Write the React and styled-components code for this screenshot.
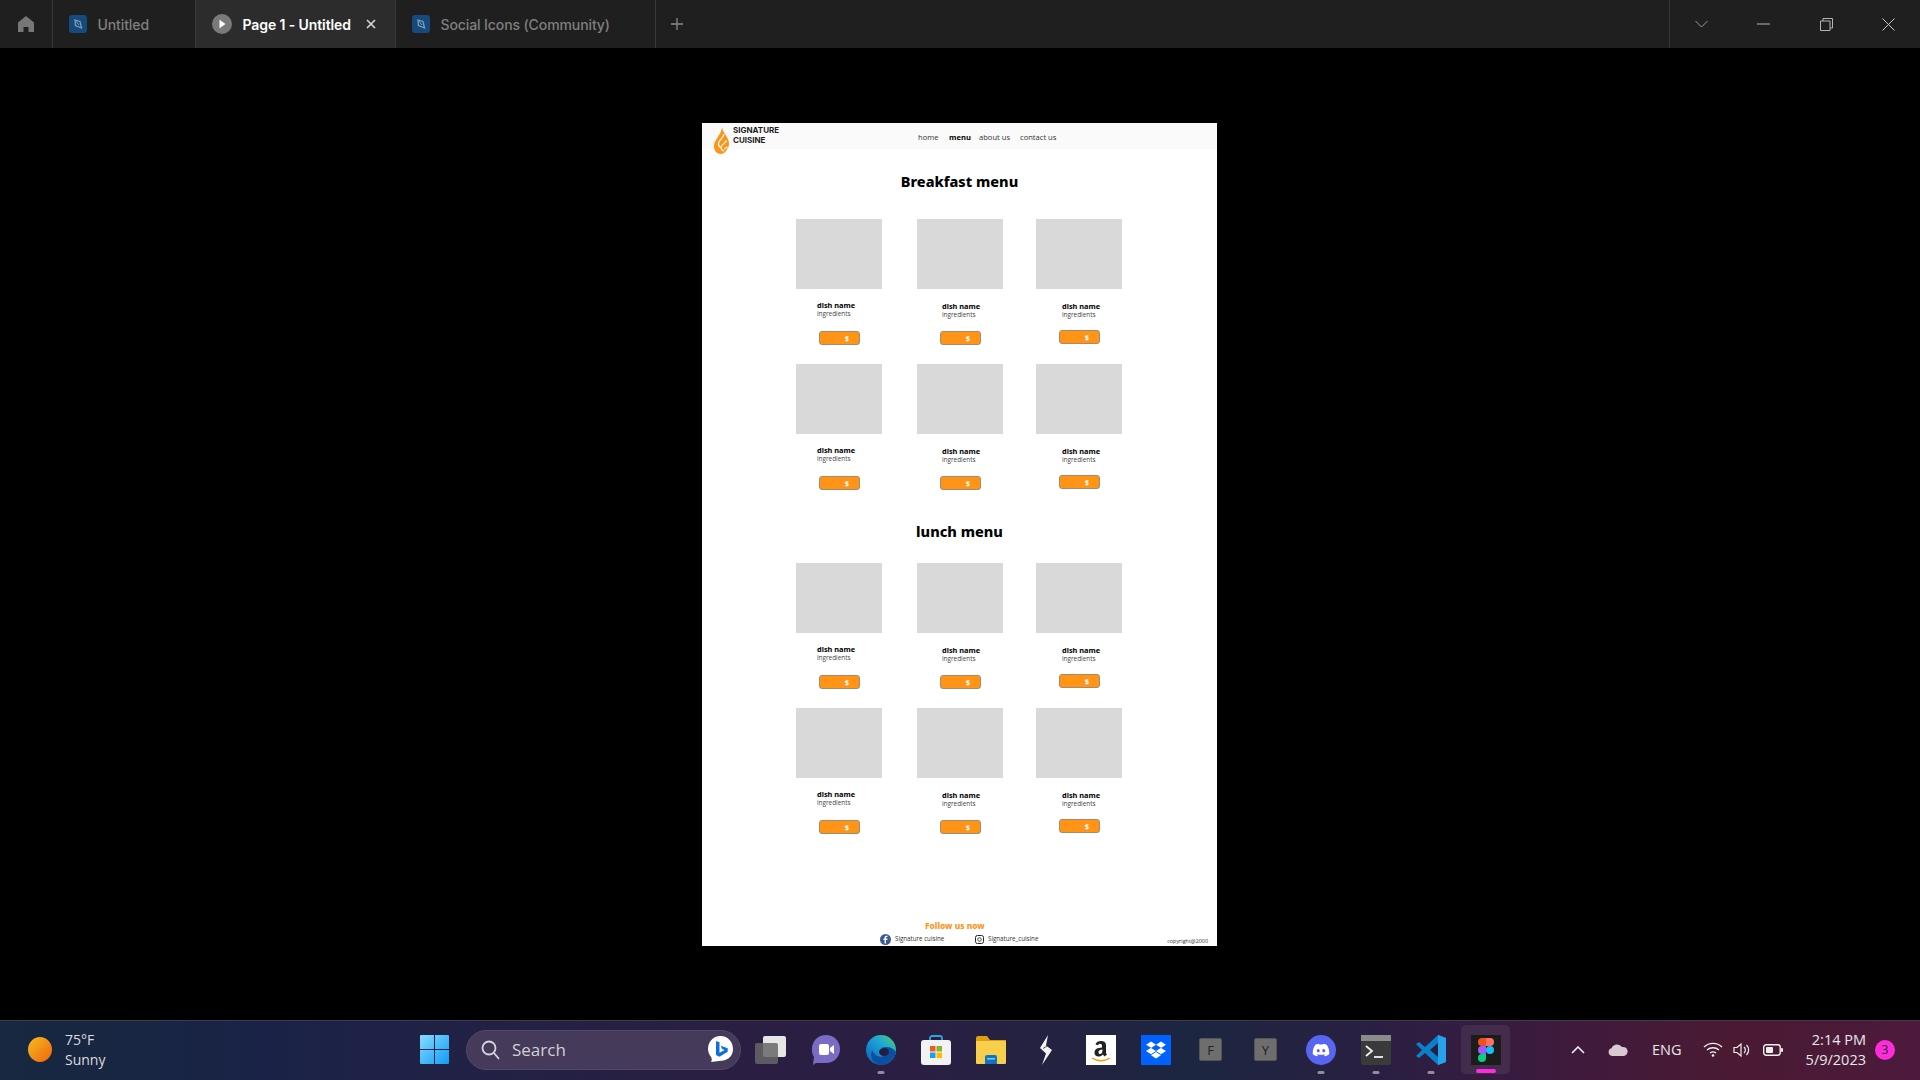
import React from 'react';
import styled, { createGlobalStyle } from 'styled-components';
import { FaDiscord, FaDropbox } from 'react-icons/fa';

const GlobalStyle = createGlobalStyle`
  html, body {
    margin: 0;
    padding: 0;
    background: #000;
    overflow: hidden;
  }
  * { box-sizing: border-box; }
`;

const orange = '#ff9416';

const Screen = styled.div`
  width: 1920px;
  height: 1080px;
  display: flex;
  flex-direction: column;
  background: #000;
  font-family: Inter, "Liberation Sans", sans-serif;
`;

/* ---------- figma title bar ---------- */

const TitleBar = styled.header`
  height: 48px;
  flex: none;
  display: flex;
  align-items: stretch;
  background: #1f1f1f;
`;

const HomeTab = styled.div`
  width: 53px;
  display: flex;
  align-items: center;
  justify-content: center;
  border-right: 1px solid #383838;
`;

const Tab = styled.div`
  width: ${({ $width }) => $width}px;
  display: flex;
  align-items: center;
  gap: 10.5px;
  padding-left: 16px;
  font-size: 14px;
  font-weight: ${({ $active }) => ($active ? 600 : 500)};
  letter-spacing: -0.1px;
  color: ${({ $active }) => ($active ? '#fff' : '#7f7f7f')};
  background: ${({ $active }) => ($active ? '#2c2c2c' : 'transparent')};
  border-right: 1px solid #383838;
`;

const TabClose = styled.svg`
  margin-left: 5px;
`;

const AddTab = styled.div`
  width: 42px;
  display: flex;
  align-items: center;
  justify-content: center;
`;

const Spacer = styled.div`
  flex: 1;
`;

const WindowControls = styled.div`
  width: 251px;
  display: flex;
  border-left: 1px solid #383838;
`;

const WindowButton = styled.div`
  width: 63px;
  display: flex;
  align-items: center;
  justify-content: center;
`;

const FileIcon = () => (
  <svg width="18" height="18" viewBox="0 0 18 18">
    <rect width="18" height="18" rx="3" fill="#154a7a" />
    <path d="M6 5l5 1.5 1.5 6.5-6-2.5z" fill="none" stroke="#7d9db8" strokeWidth="1.3" />
    <path d="M6 5l4 5" stroke="#7d9db8" strokeWidth="1" />
  </svg>
);

const PlayIcon = () => (
  <svg width="20" height="20" viewBox="0 0 20 20">
    <circle cx="10" cy="10" r="10" fill="#7a7a7a" />
    <path d="M7.5 5.8l6 4.2-6 4.2z" fill="#fff" />
  </svg>
);

const TopBar = () => (
  <TitleBar>
    <HomeTab>
      <svg width="18" height="18" viewBox="0 0 18 18">
        <path d="M9 1l8 6.5V17h-5.5v-5h-5v5H1V7.500z" fill="#777" />
      </svg>
    </HomeTab>
    <Tab $width={143}><FileIcon />Untitled</Tab>
    <Tab $width={200} $active><PlayIcon />Page 1 - Untitled
      <TabClose width="10" height="10" viewBox="0 0 10 10">
        <path d="M1 1l8 8M9 1l-8 8" stroke="#d8d8d8" strokeWidth="1.6" />
      </TabClose>
    </Tab>
    <Tab $width={260}><FileIcon />Social Icons (Community)</Tab>
    <AddTab>
      <svg width="12" height="12" viewBox="0 0 12 12">
        <path d="M6 0v12M0 6h12" stroke="#8a8a8a" strokeWidth="1.3" />
      </svg>
    </AddTab>
    <Spacer />
    <WindowControls>
      <WindowButton>
        <svg width="13" height="8" viewBox="0 0 13 8"><path d="M.5 1l6 6 6-6" fill="none" stroke="#9a9a9a" /></svg>
      </WindowButton>
      <WindowButton>
        <svg width="13" height="2" viewBox="0 0 13 2"><path d="M0 1h13" stroke="#b5b5b5" /></svg>
      </WindowButton>
      <WindowButton>
        <svg width="13" height="13" viewBox="0 0 13 13">
          <path d="M.5 3h9.500v9.500H.5z M3 3V.5h9.500V10H10" fill="none" stroke="#b5b5b5" />
        </svg>
      </WindowButton>
      <WindowButton>
        <svg width="13" height="13" viewBox="0 0 13 13"><path d="M.5.5l12 12M12.500.5l-12 12" stroke="#c8c8c8" /></svg>
      </WindowButton>
    </WindowControls>
  </TitleBar>
);

/* ---------- prototype page ---------- */

const Canvas = styled.main`
  flex: 1;
  display: flex;
  justify-content: center;
  padding: 75px 1px 0 0;
`;

const Page = styled.div`
  width: 515px;
  height: 823px;
  display: flex;
  flex-direction: column;
  background: #fff;
  color: #000;
  font-family: "Open Sans", "Noto Sans", sans-serif;
`;

const Nav = styled.nav`
  height: 26px;
  flex: none;
  position: relative;
  display: flex;
  padding-left: 216px;
  background: #fafafa;
`;

const Logo = styled.div`
  position: absolute;
  left: 12px;
  top: 4px;
  display: flex;
  gap: 4px;
`;

const LogoText = styled.div`
  font-family: Inter, "Liberation Sans", sans-serif;
  font-size: 8px;
  font-weight: 700;
  line-height: 9.5px;
  color: #1c1c1c;
  margin-top: -1px;
`;

const NavLink = styled.span`
  width: ${({ $width }) => $width}px;
  font-size: 7.6px;
  line-height: 28px;
  font-weight: ${({ $active }) => ($active ? 700 : 400)};
  color: ${({ $active }) => ($active ? '#000' : '#333')};
`;

const Heading = styled.h2`
  margin: ${({ $top }) => $top}px 0 0;
  height: 20px;
  font-family: "Noto Sans", sans-serif;
  font-size: 14.5px;
  line-height: 20px;
  font-weight: 800;
  text-align: center;
  color: #000;
`;

const MenuGrid = styled.div`
  display: grid;
  grid-template-columns: 121px 119px 86px;
  grid-auto-rows: 145px;
  margin-top: ${({ $top }) => $top}px;
  padding-left: 94px;
`;

const Dish = styled.div`
  display: flex;
  flex-direction: column;
`;

const Photo = styled.div`
  width: 86px;
  height: 70px;
  flex: none;
  background: #d9d9d9;
`;

const DishInfo = styled.div`
  height: ${({ $height }) => $height}px;
  padding: ${({ $top }) => $top}px 0 0 ${({ $left }) => $left}px;
`;

const DishName = styled.div`
  font-family: "Noto Sans", sans-serif;
  font-size: 7.4px;
  line-height: 9px;
  font-weight: 700;
  color: #000;
`;

const Ingredients = styled.div`
  font-size: 6.4px;
  line-height: 8px;
  color: #444;
`;

const PriceButton = styled.div`
  width: 41px;
  height: 14px;
  margin-left: 23px;
  display: flex;
  align-items: center;
  justify-content: flex-end;
  padding-right: 10px;
  border: 1px solid #a58c70;
  border-radius: 3px;
  background: ${orange};
  color: #fff;
  font-size: 7.5px;
  font-weight: 700;
`;

const Footer = styled.footer`
  margin-top: auto;
  height: 25px;
  position: relative;
  padding-left: 178px;
`;

const FollowTitle = styled.div`
  padding-left: 45px;
  font-family: "Noto Sans", sans-serif;
  font-size: 8.4px;
  line-height: 10px;
  font-weight: 800;
  color: ${orange};
`;

const Socials = styled.div`
  display: flex;
  margin-top: 2px;
`;

const Social = styled.div`
  width: ${({ $width }) => $width}px;
  display: flex;
  align-items: center;
  gap: 4px;
  font-size: 6.2px;
  line-height: 12px;
  color: #333;
`;

const Copyright = styled.div`
  position: absolute;
  right: 9px;
  bottom: 1px;
  font-size: 5.4px;
  line-height: 8px;
  color: #333;
`;

const Flame = () => (
  <svg width="15" height="27" viewBox="0 0 15 27">
    <path
      d="M8 0c.6 3.500 2.500 6 4 8.500 1.500 2.500 3 5 3 8 0 2-.5 3.500-1.500 5-1.500 3-3.500 5.500-6.500 5.500C3 27 0 24 0 19.500c0-4.500 2.500-7 4.500-10.500C6 6.500 7.800 3.500 8 0z"
      fill={orange}
    />
    <path
      d="M10 7c.2 3-5.500 6-5.500 10 0 1.800 1 3 2.500 3.500M12.500 13.500C11.500 16 7 17.500 7 20.500c0 1.500 1.300 3 3 3.500M13.500 20c-1 .7-3 1.200-3 2.500"
      fill="none"
      stroke="#fff"
      strokeWidth="1.200"
    />
  </svg>
);

const columns = [
  { left: 21, top: 12, height: 42 },
  { left: 25, top: 13, height: 42 },
  { left: 26, top: 13, height: 41 },
];

const MenuSection = ({ title, titleTop, gridTop }) => (
  <>
    <Heading $top={titleTop}>{title}</Heading>
    <MenuGrid $top={gridTop}>
      {[0, 1, 2, 3, 4, 5].map((n) => {
        const col = columns[n % 3];
        return (
          <Dish key={n}>
            <Photo />
            <DishInfo $left={col.left} $top={col.top} $height={col.height}>
              <DishName>dish name</DishName>
              <Ingredients>ingredients</Ingredients>
            </DishInfo>
            <PriceButton>$</PriceButton>
          </Dish>
        );
      })}
    </MenuGrid>
  </>
);

const PrototypePage = () => (
  <Canvas>
    <Page>
      <Nav>
        <Logo>
          <Flame />
          <LogoText>SIGNATURE<br />CUISINE</LogoText>
        </Logo>
        <NavLink $width={31}>home</NavLink>
        <NavLink $width={30} $active>menu</NavLink>
        <NavLink $width={41}>about us</NavLink>
        <NavLink $width={40}>contact us</NavLink>
      </Nav>
      <MenuSection title="Breakfast menu" titleTop={22} gridTop={28} />
      <MenuSection title="lunch menu" titleTop={12} gridTop={22} />
      <Footer>
        <FollowTitle>Follow us now</FollowTitle>
        <Socials>
          <Social $width={95}>
            <svg width="11" height="11" viewBox="0 0 11 11">
              <circle cx="5.500" cy="5.500" r="5.500" fill="#3b5998" />
              <path d="M6 9.500V6h1.300l.2-1.400H6v-.9c0-.4.2-.7.7-.7h.8V1.800H6.400C5.200 1.800 4.600 2.500 4.600 3.600v1H3.500V6h1.100v3.500z" fill="#fff" />
            </svg>
            Signature cuisine
          </Social>
          <Social $width={90}>
            <svg width="9" height="9" viewBox="0 0 9 9">
              <rect x=".5" y=".5" width="8" height="8" rx="2" fill="none" stroke="#222" />
              <circle cx="4.500" cy="4.500" r="1.800" fill="none" stroke="#222" strokeWidth=".8" />
            </svg>
            Signature_cuisine
          </Social>
        </Socials>
        <Copyright>copyright@2000</Copyright>
      </Footer>
    </Page>
  </Canvas>
);

/* ---------- windows taskbar ---------- */

const Taskbar = styled.footer`
  height: 60px;
  flex: none;
  display: flex;
  align-items: center;
  padding-bottom: 2px;
  color: #eee;
  font-family: "Open Sans", "Noto Sans", sans-serif;
  border-top: 1px solid #3c3a4c;
  background: linear-gradient(90deg, #17283f 0%, #1a2347 14%, #2a1f42 38%, #2a1f42 48%, #1c2640 62%, #2a1f42 72%, #3f1a3d 82%, #4a1a32 90%, #4c1a3c 100%);
`;

const Weather = styled.div`
  width: 407px;
  display: flex;
  align-items: center;
  gap: 13px;
  padding-left: 28px;
`;

const Sun = styled.div`
  width: 24px;
  height: 25px;
  border-radius: 50%;
  background: linear-gradient(135deg, #f6bd22, #ef640c);
`;

const WeatherText = styled.div`
  font-size: 14px;
  line-height: 20px;
  color: #dcdcdc;
`;

const Slot = styled.div`
  width: 55px;
  height: 49px;
  flex: none;
  position: relative;
  display: flex;
  align-items: center;
  justify-content: center;

  ${({ $selected }) =>
    $selected &&
    `&::before {
      content: '';
      position: absolute;
      inset: 0 3px;
      border-radius: 5px;
      background: rgba(255, 255, 255, 0.07);
    }`}

  > svg {
    position: relative;
  }
`;

const Indicator = styled.span`
  position: absolute;
  left: 50%;
  bottom: ${({ $wide }) => ($wide ? 1 : 0)}px;
  width: ${({ $wide }) => ($wide ? 20 : 7)}px;
  height: ${({ $wide }) => ($wide ? 4 : 3)}px;
  transform: translateX(-50%);
  border-radius: 2px;
  background: ${({ $wide }) => ($wide ? '#ff2bdc' : '#8f8f99')};
`;

const SearchBox = styled.div`
  width: 275px;
  height: 40px;
  margin: 0 2px 0 4px;
  flex: none;
  display: flex;
  align-items: center;
  gap: 12px;
  padding: 0 7px 0 14px;
  border-radius: 20px;
  background: #463a5a;
  border: 1px solid #54486a;
  font-size: 17px;
  color: #d0d0d4;
`;

const LetterTile = styled.div`
  width: 23px;
  height: 23px;
  display: flex;
  align-items: center;
  justify-content: center;
  border: 1px solid #555;
  border-radius: 2px;
  background: #6e6e6e;
  color: #222;
  font-size: 13px;
`;

const Tray = styled.div`
  margin-left: auto;
  display: flex;
  align-items: center;
  padding-right: 25px;
`;

const TrayItem = styled.div`
  width: ${({ $width }) => $width}px;
  display: flex;
  align-items: center;
  font-size: 14.500px;
  color: #e8e8e8;
`;

const Clock = styled.div`
  width: 74px;
  text-align: right;
  font-size: 14.500px;
  line-height: 20px;
  color: #e8e8e8;
`;

const Badge = styled.div`
  width: 20px;
  height: 20px;
  margin-left: 9px;
  display: flex;
  align-items: center;
  justify-content: center;
  border-radius: 50%;
  background: #ff2bdc;
  color: #222;
  font-size: 12px;
`;

const TaskIcons = {
  view: (
    <svg width="31" height="28" viewBox="0 0 31 28">
      <rect x="8" width="23" height="21" rx="2" fill="#e6e6e6" />
      <rect y="7" width="23" height="21" rx="2" fill="#666" fillOpacity=".85" />
    </svg>
  ),
  teams: (
    <svg width="28" height="30" viewBox="0 0 28 30">
      <path d="M14 0c8 0 14 6 14 14s-6 14-14 14H4l-3 2 1-8C0 19 0 17 0 14 0 6 6 0 14 0z" fill="#7a6bc4" />
      <rect x="7" y="9" width="10" height="11" rx="2" fill="#fff" />
      <path d="M18 13l4-3v9l-4-3z" fill="#fff" />
    </svg>
  ),
  edge: (
    <svg width="30" height="30" viewBox="0 0 30 30">
      <defs>
        <linearGradient id="edgeA" x1="0" y1="1" x2="1" y2="0">
          <stop offset="0" stopColor="#0b5db5" />
          <stop offset=".6" stopColor="#1aa6d8" />
          <stop offset="1" stopColor="#52d36c" />
        </linearGradient>
      </defs>
      <circle cx="15" cy="15" r="15" fill="url(#edgeA)" />
      <path d="M30 17c-1 8-8 13-14 13C8 30 3 23 6 15c2 5 7 8 12 6 2-1 3-2 3-4 0-3-3-4-6-4 5-2 12-1 15 4z" fill="#0c4fa0" />
      <ellipse cx="18" cy="17" rx="5" ry="4" fill="#241f42" />
    </svg>
  ),
  store: (
    <svg width="30" height="30" viewBox="0 0 30 30">
      <path d="M9 7V3c0-2 2-2 2-2h8s2 0 2 2v4" fill="none" stroke="#24a8df" strokeWidth="1.800" />
      <rect y="5" width="30" height="25" rx="3" fill="#f2f2f2" />
      <rect x="9" y="11" width="5.500" height="5.500" fill="#f05a28" />
      <rect x="15.500" y="11" width="5.500" height="5.500" fill="#7db82e" />
      <rect x="9" y="17.500" width="5.500" height="5.500" fill="#1ba1e2" />
      <rect x="15.500" y="17.500" width="5.500" height="5.500" fill="#ffb900" />
    </svg>
  ),
  files: (
    <svg width="30" height="28" viewBox="0 0 30 28">
      <path d="M0 2a2 2 0 012-2h9l3 4h16v4H0z" fill="#dba10f" />
      <rect y="5" width="30" height="23" rx="1" fill="#f8cf4c" />
      <path d="M9 21a2 2 0 012-2h8a2 2 0 012 2v7H9z" fill="#0f74c4" />
      <rect x="11" y="22" width="8" height="1.500" fill="#8ac7ee" />
    </svg>
  ),
  bolt: (
    <svg width="14" height="30" viewBox="0 0 14 30">
      <path d="M9 0L1 13l6 5.500L3 30l10-15-6-4.500z" fill="#f4f4f4" />
      <path d="M8 11l-4 2.500" stroke="#241f42" strokeWidth=".8" />
    </svg>
  ),
  amazon: (
    <svg width="30" height="30" viewBox="0 0 30 30">
      <rect width="30" height="30" fill="#fff" />
      <path d="M9.500 9.500c.5-2.500 3-3.500 5.500-3.500 3 0 5 1.500 5 4v7.500c0 1 .5 1.500 1 2l-2.500 2c-.7-.6-1.200-1.200-1.500-2-1.500 1.500-2.600 2-4.500 2-2.500 0-4-1.500-4-3.800 0-3.500 3-5 7.500-5.200V11c0-1.500-.7-2.300-2-2.300-1 0-1.800.6-2 1.500z M16.500 14.500c-2.500.1-4 1-4 2.700 0 1 .6 1.800 1.600 1.800 1.500 0 2.400-1.500 2.400-4.500z" fill="#222" fillRule="evenodd" />
      <path d="M6 23c5 3.500 13 3.500 18 0" fill="none" stroke="#f90" strokeWidth="1.500" />
    </svg>
  ),
  terminal: (
    <svg width="30" height="30" viewBox="0 0 30 30">
      <rect width="30" height="30" rx="2" fill="#3a3a3a" />
      <rect width="30" height="6" fill="#8b8b8b" />
      <path d="M5 11l6 5-6 5" fill="none" stroke="#f0f0f0" strokeWidth="1.800" />
      <path d="M13 22h9" stroke="#f0f0f0" strokeWidth="1.800" />
    </svg>
  ),
  vscode: (
    <svg width="30" height="30" viewBox="0 0 30 30">
      <path d="M22 0l8 3v24l-8 3L9 18l-6 5-3-2 6-6-6-6 3-2 6 5z" fill="#0a7fcc" />
      <path d="M22 0l8 3v24l-8 3z" fill="#27a2ea" />
      <path d="M22 8l-8 7 8 7z" fill="#241f42" />
    </svg>
  ),
  figma: (
    <svg width="30" height="30" viewBox="0 0 30 30">
      <rect width="30" height="30" fill="#1c1c1c" />
      <path d="M15 3H11a4 4 0 000 8h4z" fill="#f24e1e" />
      <path d="M15 3h4a4 4 0 010 8h-4z" fill="#ff7262" />
      <path d="M15 11H11a4 4 0 000 8h4z" fill="#a259ff" />
      <circle cx="19" cy="15" r="4" fill="#1abcfe" />
      <path d="M11 19h4v4a4 4 0 11-4-4z" fill="#0acf83" />
    </svg>
  ),
};

const BottomBar = () => (
  <Taskbar>
    <Weather>
      <Sun />
      <WeatherText>75°F<br />Sunny</WeatherText>
    </Weather>
    <Slot>
      <svg width="29" height="29" viewBox="0 0 29 29">
        <defs>
          <linearGradient id="winA" x1="0" y1="0" x2="1" y2="1">
            <stop offset="0" stopColor="#86dcff" />
            <stop offset="1" stopColor="#0f9cf5" />
          </linearGradient>
        </defs>
        <path d="M0 1a1 1 0 011-1h13v14H0zM15 0h13a1 1 0 011 1v13H15zM0 15h14v14H1a1 1 0 01-1-1zM15 15h14v13a1 1 0 01-1 1H15z" fill="url(#winA)" />
      </svg>
    </Slot>
    <SearchBox>
      <svg width="19" height="20" viewBox="0 0 19 20">
        <circle cx="8" cy="8" r="6.500" fill="none" stroke="#d6d6da" strokeWidth="1.800" />
        <path d="M13 13l5 6" stroke="#d6d6da" strokeWidth="1.800" />
      </svg>
      Search
      <Spacer />
      <svg width="25" height="27" viewBox="0 0 25 27">
        <path d="M12.500 0C20 0 25 6 25 13c0 8-6 12-14 12-3 0-5 1-8 1 1-2 1-3 0-5C1 18 0 16 0 13 0 6 5 0 12.500 0z" fill="#fff" />
        <path d="M8 5l3.500 1.300v10.500l5-2.800-2.500-1.200-1.300-3 7 2.500v3.500l-8.200 5L8 19z" fill="#0f6fd8" />
      </svg>
    </SearchBox>
    <Slot>{TaskIcons.view}</Slot>
    <Slot>{TaskIcons.teams}</Slot>
    <Slot>{TaskIcons.edge}<Indicator /></Slot>
    <Slot>{TaskIcons.store}</Slot>
    <Slot>{TaskIcons.files}</Slot>
    <Slot>{TaskIcons.bolt}</Slot>
    <Slot>{TaskIcons.amazon}</Slot>
    <Slot>
      <svg width="30" height="30" viewBox="0 0 30 30">
        <rect width="30" height="30" fill="#0061fe" />
        <foreignObject x="5" y="5" width="20" height="20"><FaDropbox color="#fff" size={20} /></foreignObject>
      </svg>
    </Slot>
    <Slot><LetterTile>F</LetterTile></Slot>
    <Slot><LetterTile>Y</LetterTile></Slot>
    <Slot>
      <svg width="30" height="30" viewBox="0 0 30 30">
        <circle cx="15" cy="15" r="15" fill="#5865f2" />
        <foreignObject x="6" y="6" width="18" height="18"><FaDiscord color="#fff" size={18} /></foreignObject>
      </svg>
      <Indicator />
    </Slot>
    <Slot>{TaskIcons.terminal}<Indicator /></Slot>
    <Slot>{TaskIcons.vscode}<Indicator /></Slot>
    <Slot $selected>{TaskIcons.figma}<Indicator $wide /></Slot>
    <Tray>
      <TrayItem $width={37}>
        <svg width="14" height="8" viewBox="0 0 14 8"><path d="M1 7l6-6 6 6" fill="none" stroke="#f0f0f0" strokeWidth="1.600" /></svg>
      </TrayItem>
      <TrayItem $width={44}>
        <svg width="20" height="12" viewBox="0 0 20 12">
          <path d="M4 12a4 4 0 01-.5-7.800A6 6 0 0114 3a4.500 4.500 0 012 9z" fill="#d9c9d2" />
        </svg>
      </TrayItem>
      <TrayItem $width={51}>ENG</TrayItem>
      <TrayItem $width={30}>
        <svg width="20" height="15" viewBox="0 0 20 15">
          <path d="M1 5a13 13 0 0118 0M4 8a9 9 0 0112 0M7 11a5 5 0 016 0" fill="none" stroke="#f0f0f0" strokeWidth="1.400" />
          <circle cx="10" cy="13.500" r="1.300" fill="#f0f0f0" />
        </svg>
      </TrayItem>
      <TrayItem $width={30}>
        <svg width="19" height="16" viewBox="0 0 19 16">
          <path d="M1 5.500h3L8 2v12l-4-3.500H1z" fill="none" stroke="#eee" strokeWidth="1.200" />
          <path d="M11 5a4 4 0 010 6M13.500 3a7 7 0 010 10" fill="none" stroke="#eee" strokeWidth="1.200" />
        </svg>
      </TrayItem>
      <TrayItem $width={29}>
        <svg width="20" height="12" viewBox="0 0 20 12">
          <rect x=".7" y=".7" width="16.500" height="10.500" rx="2.500" fill="none" stroke="#eee" strokeWidth="1.400" />
          <rect x="3" y="3" width="7" height="6" rx="1" fill="#eee" />
          <rect x="18" y="4" width="2" height="4" rx="1" fill="#eee" />
        </svg>
      </TrayItem>
      <Clock>2:14 PM<br />5/9/2023</Clock>
      <Badge>3</Badge>
    </Tray>
  </Taskbar>
);

const App = () => (
  <Screen>
    <GlobalStyle />
    <TopBar />
    <PrototypePage />
    <BottomBar />
  </Screen>
);

export default App;
